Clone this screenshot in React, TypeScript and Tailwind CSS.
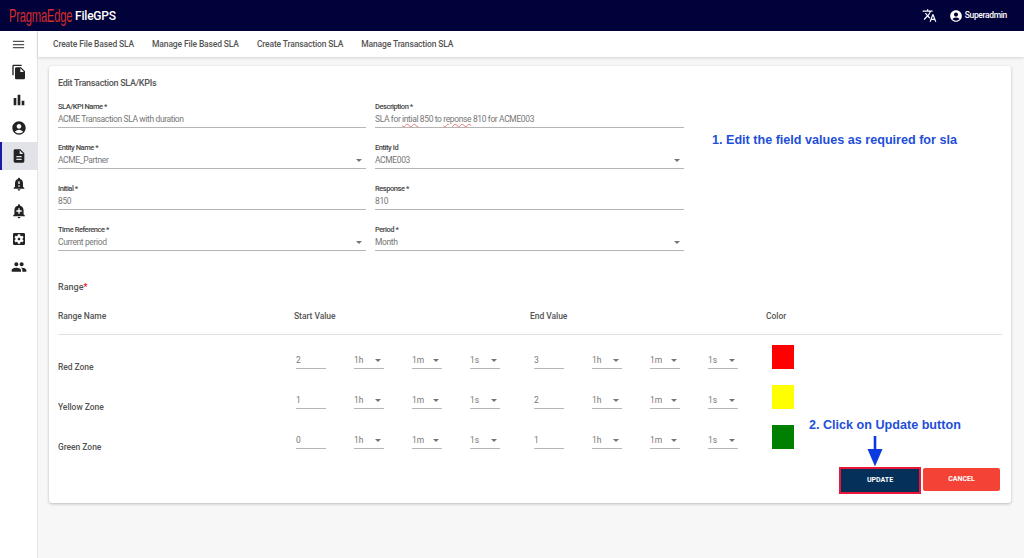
import React from 'react'
import {
  MdMenu,
  MdFileCopy,
  MdBarChart,
  MdAccountCircle,
  MdDescription,
  MdNotificationImportant,
  MdAddAlert,
  MdSettingsApplications,
  MdPeople,
  MdTranslate,
} from 'react-icons/md'

const tabs = ['Create File Based SLA', 'Manage File Based SLA', 'Create Transaction SLA', 'Manage Transaction SLA']

const navIcons = [
  { Icon: MdFileCopy, size: 16 },
  { Icon: MdBarChart, size: 16 },
  { Icon: MdAccountCircle, size: 16 },
  { Icon: MdDescription, size: 16, active: true },
  { Icon: MdNotificationImportant, size: 16 },
  { Icon: MdAddAlert, size: 16 },
  { Icon: MdSettingsApplications, size: 16 },
  { Icon: MdPeople, size: 16 },
]

const Caret = () => (
  <span className="w-0 h-0 border-x-[3.5px] border-x-transparent border-t-[3.5px] border-t-[#757575]" />
)

// Top form field, label above a value with an underline
const Field = ({ label, children, select }: { label: string; children: React.ReactNode; select?: boolean }) => (
  <div className="h-[41px]">
    <div className="text-[7.5px] leading-[10px] tracking-[-0.45px] font-medium text-[#444]">{label}</div>
    <div className="h-[16px] flex items-center justify-between border-b border-[#b5b5b5] text-[8.5px] tracking-[-0.38px] text-[#777]">
      <span>{children}</span>
      {select && <span className="mr-[4px] flex"><Caret /></span>}
    </div>
  </div>
)

const NumInput = ({ value }: { value: string }) => (
  <div className="w-[30px] h-[19px] pt-[2px] flex items-center border-b border-[#b5b5b5] text-[8.5px] text-[#777]">{value}</div>
)

const TimeSelect = ({ value }: { value: string }) => (
  <div className="w-[30px] h-[19px] pt-[2px] flex items-center justify-between border-b border-[#b5b5b5] text-[8.5px] text-[#777]">
    <span>{value}</span>
    <span className="mr-[3px] flex"><Caret /></span>
  </div>
)

const TimeGroup = ({ value }: { value: string }) => (
  <div className="flex gap-[28px]">
    <NumInput value={value} />
    <TimeSelect value="1h" />
    <TimeSelect value="1m" />
    <TimeSelect value="1s" />
  </div>
)

const zones = [
  { name: 'Red Zone', start: '2', end: '3', color: 'bg-[#ff0000]' },
  { name: 'Yellow Zone', start: '1', end: '2', color: 'bg-[#ffff00]' },
  { name: 'Green Zone', start: '0', end: '1', color: 'bg-[#008000]' },
]

export default function App() {
  return (
    <div className="w-[1024px] h-[558px] overflow-hidden bg-[#f7f7f7] flex flex-col font-['Roboto',sans-serif]">
      {/* Header */}
      <header className="h-[31px] shrink-0 bg-[#02023a] flex items-center justify-between pl-[9px] pr-[17px]">
        <div className="flex items-center">
          <span className="w-[66px] whitespace-nowrap origin-left scale-x-[0.7] scale-y-[1.15] text-[#d42b2b] text-[16px] leading-none tracking-[-0.3px] font-['Liberation_Sans',sans-serif]">PragmaEdge</span>
          <span className="text-white text-[12px] leading-none tracking-[-0.2px] font-medium">FileGPS</span>
        </div>
        <div className="flex items-center text-white">
          <MdTranslate size={15} className="mr-[12px]" />
          <MdAccountCircle size={14} className="mr-[2px]" />
          <span className="text-[8.5px] tracking-[-0.35px] font-medium">Superadmin</span>
        </div>
      </header>

      <div className="flex flex-1 min-h-0">
        {/* Sidebar */}
        <aside className="w-[38px] shrink-0 bg-white border-r border-[#e4e4e4] flex flex-col">
          <div className="h-[26px] flex items-center justify-center text-[#555]">
            <MdMenu size={15} />
          </div>
          <nav className="flex flex-col mt-[1.5px]">
            {navIcons.map(({ Icon, size, active }, i) => (
              <div
                key={i}
                className={`h-[27.8px] flex items-center justify-center text-[#222] ${
                  active ? 'bg-[#e2e3e8] border-l-2 border-[#1a1aa6] pr-[2px]' : ''
                }`}
              >
                <Icon size={size} />
              </div>
            ))}
          </nav>
        </aside>

        <div className="flex-1 min-w-0 flex flex-col">
          {/* Tabs */}
          <div className="h-[26px] shrink-0 bg-white shadow-[0_1px_3px_rgba(0,0,0,0.15)] flex items-center pl-[15px] gap-[18px] text-[8.5px] tracking-[-0.14px] font-medium text-[#555]">
            {tabs.map(t => (
              <span key={t}>{t}</span>
            ))}
          </div>

          {/* Card */}
          <div className="ml-[11px] mt-[9px] w-[962px] h-[437px] bg-white rounded-[3px] shadow-[0_1px_3px_rgba(0,0,0,0.25)] px-[9px] pt-[12px] flex flex-col">
            <h2 className="text-[9px] leading-[10px] tracking-[-0.3px] font-medium text-[#555]">Edit Transaction SLA/KPIs</h2>

            <div className="mt-[14px] grid grid-cols-[308px_309px] gap-x-[9px]">
              <Field label="SLA/KPI Name *">ACME Transaction SLA with duration</Field>
              <Field label="Description *">
                SLA for <span className="underline decoration-wavy decoration-[#e87878] decoration-[0.5px]">intial</span> 850 to{' '}
                <span className="underline decoration-wavy decoration-[#e87878] decoration-[0.5px]">reponse</span> 810 for ACME003
              </Field>
              <Field label="Entity Name *" select>ACME_Partner</Field>
              <Field label="Entity Id" select>ACME003</Field>
              <Field label="Initial *">850</Field>
              <Field label="Response *">810</Field>
              <Field label="Time Reference *" select>Current period</Field>
              <Field label="Period *" select>Month</Field>
            </div>

            <div className="mt-[15px] text-[9px] leading-[12px] font-medium text-[#555]">
              Range<span className="text-[#f00]">*</span>
            </div>

            {/* Range table */}
            <div className="mt-[18px] h-[15px] pb-[8px] flex border-b border-[#e2e2e2] box-content text-[8.5px] tracking-[-0.05px] leading-[11px] font-medium text-[#555]">
              <span className="w-[236px]">Range Name</span>
              <span className="w-[236px]">Start Value</span>
              <span className="w-[236px]">End Value</span>
              <span>Color</span>
            </div>

            <div className="mt-[10px] flex flex-col gap-[16px]">
              {zones.map(z => (
                <div key={z.name} className="flex items-end h-[24px]">
                  <span className="w-[238px] text-[8.5px] tracking-[-0.05px] leading-[11px] font-medium text-[#555] -mb-[4px]">{z.name}</span>
                  <div className="mr-[34px]"><TimeGroup value={z.start} /></div>
                  <div className="mr-[34px]"><TimeGroup value={z.end} /></div>
                  <div className={`w-[22px] h-[24px] ${z.color}`} />
                </div>
              ))}
            </div>

            <div className="mt-[18px] pr-[2px] flex justify-end items-start gap-[2px] text-[7px] font-bold text-white">
              <button className="w-[82px] h-[27px] bg-[#04305a] border-[2.5px] border-[#e8173a] flex items-center justify-center">UPDATE</button>
              <button className="mt-[1px] w-[77px] h-[23px] bg-[#f44336] rounded-[2px] flex items-center justify-center">CANCEL</button>
            </div>
          </div>
        </div>
      </div>

      {/* Annotations drawn over the page */}
      <div className="absolute left-[712px] top-[132px] text-[12.6px] leading-[16px] font-bold text-[#1e4fd8] font-['Liberation_Sans',sans-serif]">
        1. Edit the field values as required for sla
      </div>
      <div className="absolute left-[809px] top-[417px] text-[12.6px] leading-[16px] font-bold text-[#1e4fd8] font-['Liberation_Sans',sans-serif]">
        2. Click on Update button
      </div>
      <svg className="absolute left-[867px] top-[436px]" width="16" height="31" viewBox="0 0 16 31">
        <path d="M6.7 0h2.6v13H15.5L8 30.5 .5 13H6.7z" fill="#0b3be0" />
      </svg>
    </div>
  )
}
